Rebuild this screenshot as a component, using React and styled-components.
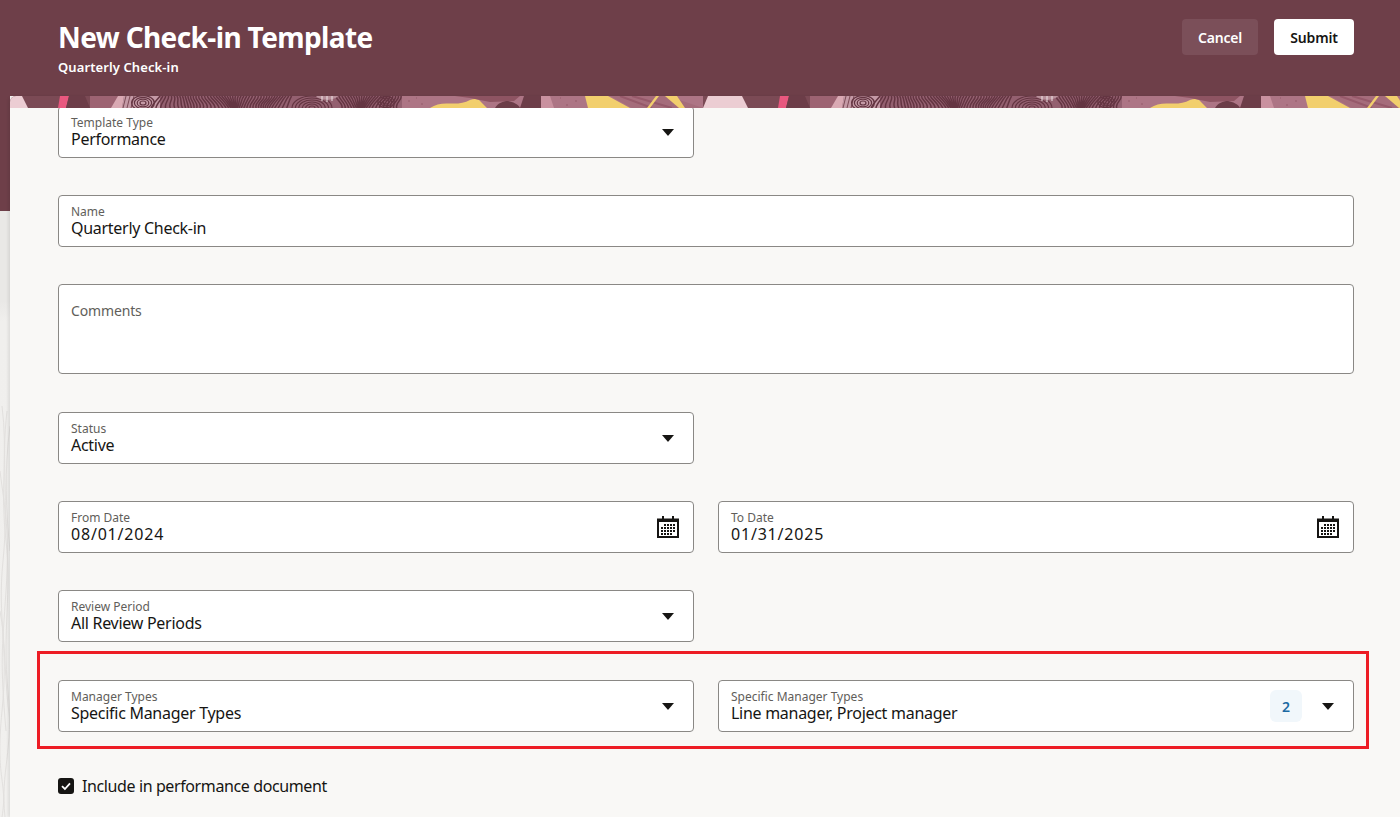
import React from 'react';
import styled, { createGlobalStyle } from 'styled-components';

const FONT = `"Noto Sans", "Open Sans", Arial, sans-serif`;

const GlobalStyle = createGlobalStyle`
  html, body {
    margin: 0;
    padding: 0;
    height: 100%;
    overflow: hidden;
    background: #f9f8f6;
    font-family: ${FONT};
  }
  * { box-sizing: border-box; }
`;

// wood grain lines for the banner strip, x is page x (tile is 720 wide)
const grainLines = () => {
  const out = [];
  for (let x = 160; x < 402; x += 2.8) {
    if (x > 292 && x < 336) continue;
    const lean = Math.sin(x / 19) * 8;
    const wob = Math.cos(x / 7) * 3;
    out.push(`M${x.toFixed(1)} 96 C${(x + wob).toFixed(1)} 99 ${(x - lean).toFixed(1)} 103 ${(x - lean + wob).toFixed(1)} 108`);
  }
  return out.join(' ');
};

const RINGS = [
  { cx: 143, cy: 103, n: 4, rx: 2.8, ry: 1.8 },
  { cx: 312, cy: 108, n: 6, rx: 3.4, ry: 2 },
  { cx: 386, cy: 102, n: 3, rx: 2.6, ry: 1.8 },
];

const BannerTile = ({ shift }) => (
  <g transform={`translate(${shift} 0)`}>
    <rect x="0" y="96" width="720" height="12" fill="#7b4a55" />
    <polygon points="-12,96 22,96 28,108 -17,108" fill="#eccdd3" />
    <polygon points="60,96 69,96 66,108 58,108" fill="#e8587f" />
    <polygon points="69,96 85,96 90,108 66,108" fill="#6c3d48" />
    <rect x="90" y="96" width="32" height="12" fill="#9d6372" />
    <rect x="120" y="96" width="282" height="12" fill="#946070" />
    <polygon points="118,96 124,96 122,108 111,108" fill="#d9a9b3" />
    <path d="M124 96 H160 V108 H122 Z" fill="#c49aa6" />
    <path d={grainLines()} stroke="#643542" strokeWidth="1.5" fill="none" />
    <path d="M126 96 L123 108 M130 96 L127 108 M134 96 L131 108" stroke="#7b4a55" strokeWidth="1" />
    {RINGS.map((ring) =>
      Array.from({ length: ring.n }, (_, i) => (
        <ellipse key={`${ring.cx}-${i}`} cx={ring.cx} cy={ring.cy} rx={3 + i * ring.rx} ry={2 + i * ring.ry} fill="none" stroke="#643542" strokeWidth="1.2" />
      ))
    )}
    <path d="M316 96 C320 101 334 101 338 96 Z" fill="#b88f9a" />
    <path d="M322 96 V101 M327 96 V102 M332 96 V101" stroke="#efe3e5" strokeWidth="1" />
    <rect x="402" y="96" width="301" height="12" fill="#ad7585" />
    <path d="M408 101h2M421 104h2M416 98h1M538 99h2M575 101h2M566 105h2M560 98h1" stroke="#955c6b" strokeWidth="1" />
    <path d="M430 108 C436 104 442 103 450 103.5 C458 104 464 103 470 100 C475 98 479 99 481 102 L487 108 Z" fill="#f2cf6d" />
    <polygon points="455,96 520,96 514,101 490,102 470,98" fill="#8e5462" />
    <path d="M495 108 C498 103 503 101 508 101 C513 102 518 104 520 108 Z" fill="#6c3d48" />
    <polygon points="524,96 541,96 541,108 520,108" fill="#6c3d48" />
    <polygon points="541,96 550,96 554,108 541,108" fill="#c9919f" />
    <polygon points="610,96 668,96 703,108 632,108" fill="#a56c7b" />
    <path d="M620 96 L652 108 M632 96 L672 108" stroke="#96596a" strokeWidth="2" />
    <polygon points="585,96 608,96 630,108 588,108" fill="#f2cf6d" />
    <polygon points="656,96 659,96 650,108 647,108" fill="#f2cf6d" />
    <polygon points="665,96 677,96 685,108 679,108" fill="#f2cf6d" />
  </g>
);

const CaretIcon = () => (
  <svg width="12" height="7" viewBox="0 0 12 7">
    <path d="M0 0 H12 L6.4 6.6 Q6 7 5.6 6.6 Z" fill="#161513" />
  </svg>
);

const CalendarIcon = () => (
  <svg width="22" height="22" viewBox="0 0 22 22">
    <path d="M1 3.5 H21 V21 H1 Z" fill="none" stroke="#161513" strokeWidth="2" />
    <rect x="1" y="3" width="20" height="3" fill="#161513" />
    <rect x="5" y="0" width="2" height="5" fill="#161513" />
    <rect x="15" y="0" width="2" height="5" fill="#161513" />
    {[8, 11, 14, 17].map((y) =>
      [4, 7, 10, 13, 16].map((x) =>
        (y === 8 && x === 4) || (y === 17 && x === 16) ? null : (
          <rect key={`${x}-${y}`} x={x} y={y} width="2" height="2" fill="#161513" />
        )
      )
    )}
  </svg>
);

const CheckIcon = () => (
  <svg width="16" height="16" viewBox="0 0 16 16">
    <path d="M4 8.2 L6.9 11 L12 5.4" fill="none" stroke="#fff" strokeWidth="1.8" />
  </svg>
);

const TOPO = [
  'M2 195 C8 240 0 280 6 330 S2 420 8 480 S0 560 5 606',
  'M7 200 C1 250 9 290 3 350 S9 430 2 500 S8 570 2 606',
  'M0 260 C5 300 10 320 6 380 S0 450 6 520',
  'M10 215 C4 260 6 300 10 340',
  'M0 400 C6 430 4 470 10 510',
];

const Select = ({ label, value, children }) => (
  <Field>
    <FieldText>
      <FieldLabel>{label}</FieldLabel>
      <FieldValue>{value}</FieldValue>
    </FieldText>
    {children}
    <IconSlot>
      <CaretIcon />
    </IconSlot>
  </Field>
);

const DateField = ({ label, value }) => (
  <Field>
    <FieldText>
      <FieldLabel>{label}</FieldLabel>
      <FieldValue $numeric>{value}</FieldValue>
    </FieldText>
    <IconSlot>
      <CalendarIcon />
    </IconSlot>
  </Field>
);

const App = () => {
  return (
    <Page>
      <GlobalStyle />
      <Header>
        <HeaderText>
          <Title>New Check-in Template</Title>
          <Subtitle>Quarterly Check-in</Subtitle>
        </HeaderText>
        <HeaderActions>
          <CancelButton>Cancel</CancelButton>
          <SubmitButton>Submit</SubmitButton>
        </HeaderActions>
      </Header>
      <Body>
        <Gutter>
          <GutterTop />
          <GutterTexture>
            <svg width="10" height="606" viewBox="0 0 10 606">
              {TOPO.map((d) => (
                <path key={d} d={d} fill="none" stroke="#e2e0de" strokeWidth="1" />
              ))}
            </svg>
          </GutterTexture>
        </Gutter>
        <Panel>
          <Banner>
            <svg width="1390" height="12" viewBox="10 96 1390 12">
              <BannerTile shift={0} />
              <BannerTile shift={720} />
            </svg>
          </Banner>
          <Scroller>
            <Form>
              <HalfRow>
                <Select label="Template Type" value="Performance" />
              </HalfRow>
              <Row>
                <Field>
                  <FieldText>
                    <FieldLabel>Name</FieldLabel>
                    <FieldValue>Quarterly Check-in</FieldValue>
                  </FieldText>
                </Field>
              </Row>
              <Row $after={38}>
                <TextArea>
                  <TextAreaLabel>Comments</TextAreaLabel>
                </TextArea>
              </Row>
              <HalfRow>
                <Select label="Status" value="Active" />
              </HalfRow>
              <HalfRow>
                <DateField label="From Date" value="08/01/2024" />
                <DateField label="To Date" value="01/31/2025" />
              </HalfRow>
              <HalfRow $after={9}>
                <Select label="Review Period" value="All Review Periods" />
              </HalfRow>
              <Highlight>
                <HalfRow $after={0}>
                  <Select label="Manager Types" value="Specific Manager Types" />
                  <Select label="Specific Manager Types" value="Line manager, Project manager">
                    <CountBadge>2</CountBadge>
                  </Select>
                </HalfRow>
              </Highlight>
              <CheckRow>
                <CheckBox>
                  <CheckIcon />
                </CheckBox>
                Include in performance document
              </CheckRow>
            </Form>
          </Scroller>
        </Panel>
      </Body>
    </Page>
  );
};

export default App;

const Page = styled.div`
  display: flex;
  flex-direction: column;
  width: 1400px;
  height: 817px;
  overflow: hidden;
  background: #f9f8f6;
`;

const Header = styled.header`
  display: flex;
  flex: 0 0 96px;
  justify-content: space-between;
  padding: 0 46px 0 58px;
  background: #6e3f49;
  color: #fff;
`;

const HeaderText = styled.div`
  display: flex;
  flex-direction: column;
  padding-top: 18px;
`;

const Title = styled.h1`
  margin: 0;
  font-size: 28px;
  line-height: 38px;
  font-weight: 700;
  letter-spacing: -0.62px;
`;

const Subtitle = styled.div`
  margin-top: 2px;
  font-size: 13px;
  line-height: 18px;
  font-weight: 600;
  letter-spacing: 0.1px;
`;

const HeaderActions = styled.div`
  display: flex;
  gap: 16px;
  padding-top: 19px;
`;

const HeaderButton = styled.button`
  height: 36px;
  padding: 0;
  border: 0;
  border-radius: 4px;
  font-family: ${FONT};
  font-size: 14px;
  font-weight: 600;
  letter-spacing: -0.2px;
`;

const CancelButton = styled(HeaderButton)`
  width: 76px;
  background: #7b4f59;
  color: #fff;
`;

const SubmitButton = styled(HeaderButton)`
  width: 80px;
  background: #fff;
  color: #161513;
`;

const Body = styled.div`
  display: flex;
  flex: 1;
  min-height: 0;
`;

const Gutter = styled.div`
  display: flex;
  flex: 0 0 10px;
  flex-direction: column;
`;

const GutterTop = styled.div`
  flex: 0 0 115px;
  background: #6e3f49;
`;

const GutterTexture = styled.div`
  flex: 1;
  overflow: hidden;
  background: linear-gradient(#e9e8e6 0, #e9e8e6 90px, #f0efed 110px, #f1f0ee 100%);
`;

const Panel = styled.main`
  display: flex;
  flex: 1;
  flex-direction: column;
  min-width: 0;
  border-top-left-radius: 6px;
  overflow: hidden;
  background: #f9f8f6;
  box-shadow: -2px 0 3px rgba(0, 0, 0, 0.08);
`;

const Banner = styled.div`
  flex: 0 0 12px;
  height: 12px;
  line-height: 0;
`;

const Scroller = styled.div`
  flex: 1;
  overflow: hidden;
`;

const Form = styled.form`
  display: flex;
  flex-direction: column;
  margin-top: -2px;
  padding: 0 46px 0 48px;
`;

const Row = styled.div`
  margin-bottom: ${(p) => (p.$after === undefined ? 37 : p.$after)}px;
`;

const HalfRow = styled(Row)`
  display: grid;
  grid-template-columns: 636px 636px;
  gap: 24px;
`;

const Field = styled.div`
  display: flex;
  align-items: center;
  height: 52px;
  padding: 0 0 0 12px;
  border: 1px solid #8a8885;
  border-radius: 4px;
  background: #fff;
`;

const FieldText = styled.div`
  flex: 1;
  min-width: 0;
  padding-top: 1px;
`;

const FieldLabel = styled.div`
  font-size: 12px;
  line-height: 14px;
  color: #615e5a;
`;

const FieldValue = styled.div`
  font-size: 16px;
  line-height: 19px;
  color: #161513;
  letter-spacing: ${(p) => (p.$numeric ? '0.8px' : '-0.28px')};
`;

const TextArea = styled.div`
  height: 90px;
  padding: 17px 12px 0;
  border: 1px solid #8a8885;
  border-radius: 4px;
  background: #fff;
`;

const TextAreaLabel = styled.div`
  font-size: 14px;
  line-height: 18px;
  color: #615e5a;
  letter-spacing: -0.15px;
`;

const IconSlot = styled.div`
  display: flex;
  flex: 0 0 50px;
  justify-content: center;
  padding-right: 1px;
  line-height: 0;
`;

const CountBadge = styled.div`
  display: flex;
  flex: 0 0 32px;
  align-items: center;
  justify-content: center;
  height: 32px;
  margin-right: 1px;
  border-radius: 6px;
  background: #f1f7fb;
  color: #1c6aa3;
  font-size: 14px;
  font-weight: 600;
`;

const Highlight = styled.div`
  margin: 0 -15px 0 -21px;
  padding: 26px 12px 14px 18px;
  border: 3px solid #ed1c24;
`;

const CheckRow = styled.label`
  display: flex;
  align-items: center;
  gap: 8px;
  height: 22px;
  margin-top: 26px;
  font-size: 16px;
  line-height: 22px;
  color: #161513;
  letter-spacing: -0.39px;
`;

const CheckBox = styled.span`
  display: flex;
  flex: 0 0 16px;
  height: 16px;
  border-radius: 3px;
  background: #161513;
`;
